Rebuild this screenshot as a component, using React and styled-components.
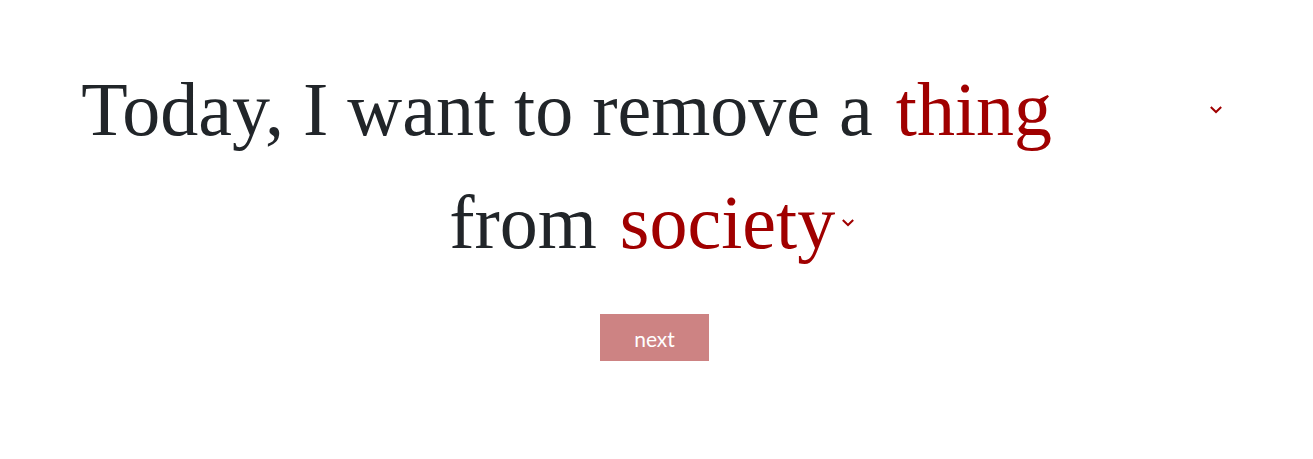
import React from "react";
import styled, { createGlobalStyle } from "styled-components";

const GlobalStyle = createGlobalStyle`
  *, *::before, *::after { box-sizing: border-box; }
  body { margin: 0; background: #fff; color: #212529; font-family: Lato, sans-serif; }
`;

const Page = styled.main`
  display: flex;
  flex-direction: column;
  align-items: center;
  padding: 53px 76px 53px 72px;
`;

const Prompt = styled.form`
  display: flex;
  flex-direction: column;
  align-items: center;
  width: 100%;
  font-family: "Liberation Serif", "Times New Roman", serif;
  font-size: 76px;
  line-height: 113px;
`;

const Line = styled.div`
  display: flex;
  align-items: center;
  justify-content: center;
  gap: 19px;
  white-space: nowrap;
`;

const SelectBox = styled.span`
  display: inline-grid;
  align-items: center;
  width: ${(p) => p.$width}px;
  color: #a00000;
`;

const Select = styled.select`
  grid-area: 1 / 1;
  appearance: none;
  width: 100%;
  height: 113px;
  margin: 0;
  padding: 0 4px;
  border: 0;
  background: transparent;
  color: inherit;
  font: inherit;
  cursor: pointer;
`;

const Chevron = styled.svg`
  grid-area: 1 / 1;
  justify-self: end;
  width: 12px;
  height: 12px;
  margin-right: 6px;
  pointer-events: none;
`;

const NextButton = styled.button`
  margin-top: 35px;
  padding: 13px 34px 10px;
  border: 0;
  background: #cd8383;
  color: #fff;
  font-family: Lato, sans-serif;
  font-size: 21px;
  line-height: 24px;
  cursor: pointer;
`;

function Choice({ id, width, options }) {
  return (
    <SelectBox $width={width}>
      <Select id={id} defaultValue={options[0]}>
        {options.map((o) => <option key={o}>{o}</option>)}
      </Select>
      <Chevron viewBox="0 0 12 12" aria-hidden="true">
        <path d="M0.8 3 6 8 11.2 3" fill="none" stroke="currentColor" strokeWidth="2" />
      </Chevron>
    </SelectBox>
  );
}

export default function App() {
  return (
    <Page>
      <GlobalStyle />
      <Prompt>
        <Line>
          <label htmlFor="item">Today, I want to remove a</label>
          <Choice id="item" width={336} options={["thing"]} />
        </Line>
        <Line>
          <label htmlFor="source">from</label>
          <Choice id="source" width={244} options={["society"]} />
        </Line>
        <NextButton type="button">next</NextButton>
      </Prompt>
    </Page>
  );
}
